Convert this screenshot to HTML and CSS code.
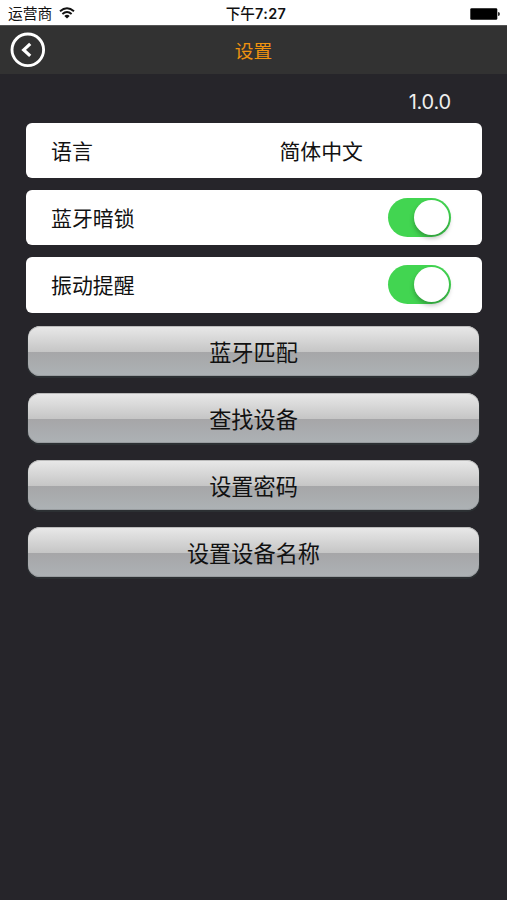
FILE: index.html
```html
<!DOCTYPE html>
<html lang="zh-CN">
<head>
<meta charset="utf-8">
<title>设置</title>
<link rel="stylesheet" href="styles.css">
</head>
<body>
<div class="status">
  <div class="carrier"><span>运营商</span>
    <svg class="wifi" width="16" height="12" viewBox="0 0 16 12"><g fill="none" stroke="#111" stroke-width="1.9"><path d="M1 4.2Q8-1.8 15 4.2"/><path d="M3.4 7Q8 3 12.6 7"/></g><path d="M5.3 8.9Q8 6.7 10.7 8.9L8 11.6Z" fill="#111"/></svg>
  </div>
  <div class="time">下午<b>7:27</b></div>
  <svg class="battery" width="30" height="12" viewBox="0 0 30 12"><rect x=".3" y=".2" width="27" height="11.5" rx="1.3"/><path d="M28.2 4Q29.8 4.2 29.8 6T28.2 8Z"/></svg>
</div>
<header class="nav">
  <svg class="back" width="36" height="36" viewBox="0 0 36 36" fill="none" stroke="#fff"><circle cx="17.8" cy="17.8" r="15.8" stroke-width="2.9"/><path d="M20.2 11.9L13.7 17.9L20.2 23.9" stroke-width="3.2"/></svg>
  <h1>设置</h1>
</header>
<main>
  <div class="version">1.0.0</div>
  <div class="list">
    <div class="card"><span>语言</span><span class="value">简体中文</span></div>
    <div class="card"><span>蓝牙暗锁</span><span class="switch"><i class="knob"></i></span></div>
    <div class="card"><span>振动提醒</span><span class="switch"><i class="knob"></i></span></div>
    <button>蓝牙匹配</button>
    <button>查找设备</button>
    <button>设置密码</button>
    <button>设置设备名称</button>
  </div>
</main>
</body>
</html>
```
FILE: styles.css
```css
* { box-sizing: border-box; }
body {
  margin: 0;
  height: 900px;
  overflow: hidden;
  background: #26252a;
  font-family: "Liberation Sans", "Noto Sans CJK SC", sans-serif;
  color: #111;
}
.status {
  display: grid;
  grid-template-columns: 1fr auto 1fr;
  align-items: center;
  height: 25px;
  padding: 2px 7px 0 8px;
  background: #fff;
  font-size: 14.8px;
  line-height: 22px;
}
.carrier { display: flex; align-items: center; gap: 7px; }
.wifi { margin-top: -1px; }
.time {
  padding-left: 4px;
  font-family: Inter, "Noto Sans CJK SC", sans-serif;
  font-size: 14.6px;
  font-weight: 500;
}
.time b { font-size: 14.4px; font-weight: 600; letter-spacing: .4px; }
.battery { justify-self: end; }
.nav {
  display: grid;
  grid-template-columns: 1fr auto 1fr;
  align-items: center;
  height: 49px;
  padding: 0 10px;
  border-top: 1px solid #555;
  background: #323232;
}
h1 {
  margin: 0;
  padding-top: 3px;
  color: #f0930f;
  font-size: 18.7px;
  font-weight: 400;
  line-height: 28px;
}
.version {
  height: 49px;
  padding: 14px 56px 0 0;
  color: #eee;
  font-family: Inter, sans-serif;
  font-size: 20px;
  line-height: 28px;
  letter-spacing: -0.2px;
  text-align: right;
}
.list {
  display: grid;
  grid-auto-rows: 55.2px;
  row-gap: 12px;
  padding: 0 25px 0 26px;
}
.card {
  display: flex;
  align-items: center;
  justify-content: space-between;
  padding: 0 31px 1px 25px;
  border-radius: 6px;
  background: #fff;
  font-size: 20.9px;
}
.value { margin-right: 88px; }
.switch {
  display: flex;
  justify-content: flex-end;
  width: 63px;
  height: 39px;
  padding: 2px;
  border-radius: 20px;
  background: #42d551;
}
.knob {
  width: 35px;
  height: 35px;
  border-radius: 50%;
  background: #fff;
  box-shadow: 0 3px 5px rgba(0, 0, 0, .28);
}
button {
  height: 50px;
  margin: 1px 3px 0 2px;
  padding: 0;
  border: 0;
  border-radius: 12px;
  background: linear-gradient(#e9e9e9, #c6c6c6 51%, #a6a6a8 52%, #adb2b5);
  box-shadow: 0 1px 0 1px #2c3033, inset 0 1px 0 #bbb, inset 0 -1px 0 #999da0;
  color: #111;
  font-family: inherit;
  font-size: 22.2px;
}
```
